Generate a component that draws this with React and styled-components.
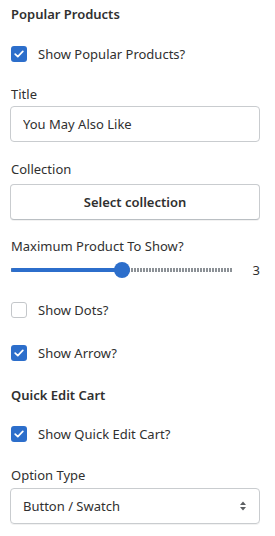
import React, { useState } from "react";
import styled, { createGlobalStyle } from "styled-components";

const GlobalStyle = createGlobalStyle`
  body {
    margin: 0;
    background: #ffffff;
    font-family: "Noto Sans", "Open Sans", sans-serif;
    font-size: 13px;
    color: #303030;
  }
`;

const Panel = styled.div`
  width: 250px;
  padding: 4px 0 0 10px;
  display: flex;
  flex-direction: column;
`;

const Heading = styled.h3`
  margin: 0 0 ${(p) => p.$gap || 20}px 1px;
  font-size: 13px;
  font-weight: 600;
  line-height: 20px;
  color: #303030;
`;

const CheckRow = styled.label`
  display: flex;
  align-items: center;
  gap: 11px;
  height: 20px;
  margin: 0 0 ${(p) => p.$gap || 20}px 1px;
  cursor: pointer;
`;

const Box = styled.span`
  width: 16px;
  height: 16px;
  box-sizing: border-box;
  border-radius: 3px;
  display: flex;
  align-items: center;
  justify-content: center;
  background: ${(p) => (p.$checked ? "#2c6ecb" : "#fff")};
  border: ${(p) => (p.$checked ? "none" : "1.5px solid #c4c7ca")};
`;

const Field = styled.div`
  display: flex;
  flex-direction: column;
  margin-bottom: ${(p) => p.$gap || 17}px;
`;

const Label = styled.div`
  line-height: 20px;
  margin: 0 0 ${(p) => p.$gap || 2}px 1px;
`;

const TextInput = styled.input`
  box-sizing: border-box;
  height: 36px;
  width: 100%;
  padding: 0 12px;
  border: 1px solid #c9cccf;
  border-radius: 4px;
  font: inherit;
  color: #303030;
  outline: none;
`;

const Button = styled.button`
  box-sizing: border-box;
  height: 36px;
  width: 100%;
  border: 1px solid #c9cccf;
  border-bottom-color: #babfc3;
  border-radius: 4px;
  background: #fff;
  font: inherit;
  font-weight: 600;
  color: #303030;
  box-shadow: 0 1px 0 rgba(0, 0, 0, 0.05);
`;

const SliderRow = styled.div`
  display: flex;
  align-items: center;
  height: 20px;
`;

const Track = styled.div`
  position: relative;
  flex: 0 0 222px;
  margin-left: 1px;
  height: 4px;
  background: repeating-linear-gradient(
    to right,
    #8c9196 0 2px,
    transparent 2px 3px
  );
`;

const Filled = styled.div`
  height: 100%;
  background: #2c6ecb;
  border-radius: 2px;
`;

const Thumb = styled.span`
  position: absolute;
  top: 50%;
  width: 16px;
  height: 16px;
  margin: -8px 0 0 -8px;
  border-radius: 50%;
  background: #2c6ecb;
`;

const Value = styled.span`
  margin-left: auto;
  padding-right: 0;
  line-height: 20px;
`;

const SelectBox = styled.div`
  box-sizing: border-box;
  height: 36px;
  display: flex;
  align-items: center;
  justify-content: space-between;
  padding: 0 12px;
  border: 1px solid #c9cccf;
  border-radius: 4px;
  box-shadow: 0 1px 0 rgba(0, 0, 0, 0.05);
`;

function Check() {
  return (
    <svg width="10" height="8" viewBox="0 0 10 8" fill="none">
      <path d="M1.2 4.2 L3.8 6.6 L8.8 1.4" stroke="#fff" strokeWidth="1.7" strokeLinecap="round" strokeLinejoin="round" />
    </svg>
  );
}

function Checkbox({ checked, label, gap }) {
  return (
    <CheckRow $gap={gap}>
      <Box $checked={checked}>{checked && <Check />}</Box>
      <span>{label}</span>
    </CheckRow>
  );
}

export default function App() {
  const [count] = useState(3);
  const pct = ((count - 1) / 4) * 100;

  return (
    <Panel>
      <GlobalStyle />
      <Heading>Popular Products</Heading>
      <Checkbox checked label="Show Popular Products?" />

      <Field>
        <Label>Title</Label>
        <TextInput defaultValue="You May Also Like" />
      </Field>

      <Field $gap={16}>
        <Label $gap={5}>Collection</Label>
        <Button>Select collection</Button>
      </Field>

      <Field $gap={20}>
        <Label $gap={4}>Maximum Product To Show?</Label>
        <SliderRow>
          <Track>
            <Filled style={{ width: pct + "%" }} />
            <Thumb style={{ left: pct + "%" }} />
          </Track>
          <Value>{count}</Value>
        </SliderRow>
      </Field>

      <Checkbox label="Show Dots?" gap={23} />
      <Checkbox checked label="Show Arrow?" gap={22} />

      <Heading $gap={19}>Quick Edit Cart</Heading>
      <Checkbox checked label="Show Quick Edit Cart?" gap={21} />

      <Field>
        <Label $gap={3}>Option Type</Label>
        <SelectBox>
          <span>Button / Swatch</span>
          <svg width="8" height="12" viewBox="0 0 8 12">
            <path d="M4 1.5 L7 5 H1 Z" fill="#5c5f62" />
            <path d="M4 10.5 L7 7 H1 Z" fill="#5c5f62" />
          </svg>
        </SelectBox>
      </Field>
    </Panel>
  );
}
